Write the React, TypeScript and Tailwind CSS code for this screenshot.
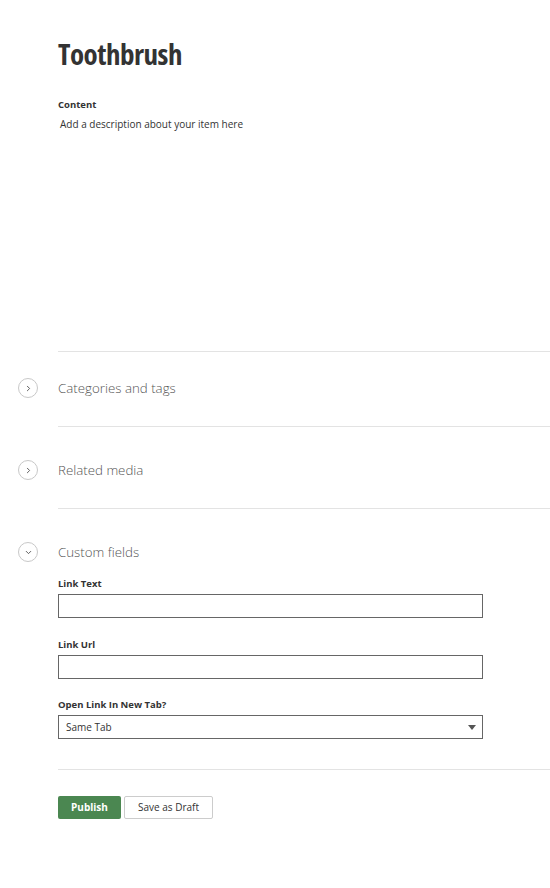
import { ChevronRight, ChevronDown } from 'lucide-react'

const sections = [
  { title: 'Categories and tags', open: false },
  { title: 'Related media', open: false },
]

function Toggle({ open }: { open: boolean }) {
  return (
    <span className="flex h-[20px] w-[20px] items-center justify-center rounded-full border border-[#c8c8c8] text-[#555]">
      {open ? <ChevronDown className="h-[9px] w-[9px]" strokeWidth={2.5} /> : <ChevronRight className="h-[9px] w-[9px]" strokeWidth={2.5} />}
    </span>
  )
}

function Field({ label, children }: { label: string; children: React.ReactNode }) {
  return (
    <div className="flex flex-col">
      <label className="mb-[4px] text-[9.5px] font-bold leading-[12px] text-[#333]">{label}</label>
      {children}
    </div>
  )
}

export default function App() {
  return (
    <div className="min-h-[888px] w-[550px] bg-white font-['Open_Sans','Liberation_Sans',sans-serif] text-[#333]">
      <div className="pl-[58px]">
        <h1 className="pt-[36px] text-[29px] font-bold leading-[36px] tracking-[-0.5px] text-[#333] [font-stretch:75%]">
          Toothbrush
        </h1>
        <div className="mt-[27px] text-[9.5px] font-bold leading-[12px]">Content</div>
        <p className="mt-[7px] pl-[2px] text-[10px] leading-[13px] text-[#333]">Add a description about your item here</p>
        <div className="h-[220px]" />
      </div>

      {sections.map((s, i) => (
        <div key={s.title}>
          <div className="ml-[58px] h-px bg-[#e3e3e3]" />
          <div className={`flex items-center ${i === 0 ? 'pt-[26px]' : 'pt-[33px]'} pb-[28px]`}>
            <div className="flex w-[58px] justify-center pr-[2px]">
              <Toggle open={s.open} />
            </div>
            <span className="text-[13.3px] font-light leading-[20px] text-[#555]">{s.title}</span>
          </div>
        </div>
      ))}

      {/* custom fields, expanded */}
      <div className="ml-[58px] h-px bg-[#e3e3e3]" />
      <div className="flex items-center pt-[33px]">
        <div className="flex w-[58px] justify-center pr-[2px]">
          <Toggle open />
        </div>
        <span className="text-[13.3px] font-light leading-[20px] text-[#555]">Custom fields</span>
      </div>
      <div className="flex w-[483px] flex-col gap-[20.5px] pl-[58px] pt-[16px]">
        <Field label="Link Text">
          <input className="h-[24px] border border-[#666] px-[6px] text-[10px] outline-none" />
        </Field>
        <Field label="Link Url">
          <input className="h-[24px] border border-[#666] px-[6px] text-[10px] outline-none" />
        </Field>
        <Field label="Open Link In New Tab?">
          <div className="relative flex h-[24px] items-center border border-[#666] px-[7px] text-[10px]">
            Same Tab
            <span className="absolute right-[6px] top-[9px] h-0 w-0 border-x-[4px] border-t-[5px] border-x-transparent border-t-[#555]" />
          </div>
        </Field>
      </div>

      <div className="ml-[58px] mt-[30px] h-px bg-[#e3e3e3]" />
      <div className="flex gap-[3px] pl-[58px] pt-[26px]">
        <button className="h-[23px] w-[63px] rounded-[2px] bg-[#4b8751] text-[10px] font-bold text-white">Publish</button>
        <button className="h-[23px] w-[89px] rounded-[2px] border border-[#ccc] bg-white text-[10px] text-[#333]">Save as Draft</button>
      </div>
    </div>
  )
}
